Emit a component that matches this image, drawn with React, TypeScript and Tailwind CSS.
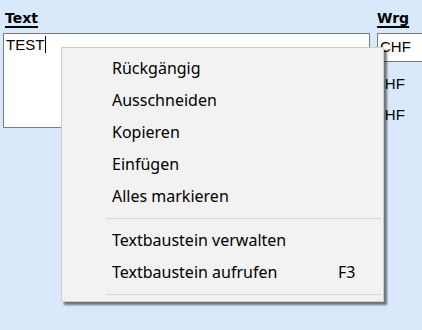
import React from "react"

interface MenuItem {
  label: string
  shortcut?: string
}

const editItems: MenuItem[] = [
  { label: "Rückgängig" },
  { label: "Ausschneiden" },
  { label: "Kopieren" },
  { label: "Einfügen" },
  { label: "Alles markieren" },
]

const blockItems: MenuItem[] = [
  { label: "Textbaustein verwalten" },
  { label: "Textbaustein aufrufen", shortcut: "F3" },
]

export default function App() {
  return (
    <div className="relative w-[422px] h-[330px] overflow-hidden bg-[#d9e8fb] font-['Liberation_Sans',sans-serif]">
      <div className="flex flex-col pl-[3px] pt-[8px]">
        <div className="flex h-[25px] font-['DejaVu_Sans',sans-serif] font-bold text-[14px] text-black underline underline-offset-[3px] decoration-[1.5px]">
          <span className="ml-[2px] w-[372px] shrink-0">Text</span>
          <span>Wrg</span>
        </div>
        <div className="flex gap-[7px]">
          <div className="w-[367px] h-[95px] shrink-0 bg-white border border-[#7a7a7a] px-[2px] pt-[2px] text-[15px] leading-[18px] text-black flex items-start">
            <span>TEST</span>
            <span className="w-px h-[17px] bg-black ml-[1px]" />
          </div>
          <div className="flex flex-col flex-1 text-[15px] text-black">
            <div className="h-[29px] bg-white border border-[#7a7a7a] border-r-0 pl-[2px] pt-[4px] leading-[18px]">
              CHF
            </div>
            <div className="-ml-[3px] pt-[13px] leading-[18px]">CHF</div>
            <div className="-ml-[3px] pt-[13px] leading-[18px]">CHF</div>
          </div>
        </div>
      </div>

      <ContextMenu />
    </div>
  )
}

function ContextMenu() {
  return (
    <div className="absolute left-[61px] top-[47px] w-[323px] bg-[#f2f2f2] border border-[#cccccc] shadow-[3px_3px_2px_rgba(0,0,0,0.5)] pt-[4px] pb-[1px] pr-[2px] font-['Noto_Sans',sans-serif] text-[16px] text-black">
      {editItems.map((item) => (
        <Row key={item.label} {...item} />
      ))}
      <Separator />
      {blockItems.map((item) => (
        <Row key={item.label} {...item} />
      ))}
      <Separator />
    </div>
  )
}

function Row({ label, shortcut }: MenuItem) {
  return (
    <div className="flex items-center h-[32px] pl-[50px]">
      <span className="w-[226px]">{label}</span>
      {shortcut && <span>{shortcut}</span>}
    </div>
  )
}

function Separator() {
  return (
    <div className="h-[12px] flex items-center pl-[44px]">
      <div className="h-px w-full bg-[#d7d7d7]" />
    </div>
  )
}
